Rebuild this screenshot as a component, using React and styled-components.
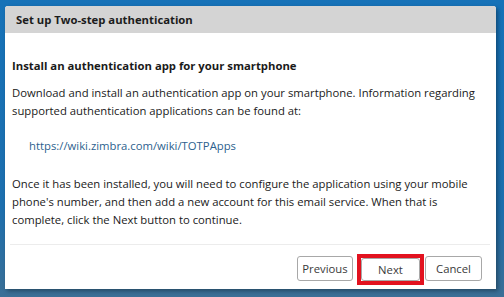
import React from "react";
import styled, { createGlobalStyle } from "styled-components";

const GlobalStyle = createGlobalStyle`
  html, body {
    margin: 0;
    padding: 0;
  }
  body {
    font-family: "Open Sans", "Noto Sans", sans-serif;
    color: #1a1a1a;
  }
`;

const Screen = styled.div`
  width: 504px;
  height: 297px;
  box-sizing: border-box;
  padding: 6px 8px 8px 5px;
  background: linear-gradient(180deg, #1672b8 0%, #1d6fae 70%, #3b6f96 100%);
  display: flex;
`;

const Dialog = styled.div`
  flex: 1;
  display: flex;
  flex-direction: column;
  background: #ffffff;
  border-radius: 3px 3px 0 0;
  box-shadow: 2px 2px 4px rgba(0, 0, 0, 0.35);
  overflow: hidden;
`;

const TitleBar = styled.div`
  height: 27px;
  flex-shrink: 0;
  background: #d4d4d4;
  display: flex;
  align-items: center;
  padding-left: 11px;
  font-size: 11.3px;
  font-weight: 700;
  color: #1c1c1c;
`;

const Body = styled.div`
  flex: 1;
  padding: 24px 12px 0 7px;
  font-size: 11.3px;
  line-height: 18px;
  white-space: nowrap;
`;

const Heading = styled.div`
  font-weight: 700;
  margin-bottom: 9px;
`;

const Paragraph = styled.p`
  margin: 0 0 ${(p) => p.$gap || 0}px;
`;

const Link = styled.a`
  display: block;
  margin: 0 0 20px 17px;
  color: #2d5f8e;
  text-decoration: none;
`;

const Footer = styled.div`
  margin: 0 6px 0 5px;
  border-top: 1px solid #ececec;
  height: 45px;
  box-sizing: border-box;
  display: flex;
  align-items: flex-start;
  justify-content: flex-end;
  padding: 11px 8px 0 0;
`;

const Button = styled.button`
  box-sizing: border-box;
  height: ${(p) => p.$height || 25}px;
  width: ${(p) => p.$width || 56}px;
  padding: 0;
  background: #ffffff;
  border: 1px solid #a8a8a8;
  border-radius: 3px;
  font-family: "Open Sans", "Noto Sans", sans-serif;
  font-size: 11.3px;
  color: #3a3a3a;
`;

const Highlight = styled.div`
  margin: -2px 1px 0 4px;
  border: 4px solid #e2121f;
  display: flex;
`;

export default function App() {
  return (
    <>
      <GlobalStyle />
      <Screen>
        <Dialog>
          <TitleBar>Set up Two-step authentication</TitleBar>
          <Body>
            <Heading>Install an authentication app for your smartphone</Heading>
            <Paragraph $gap={17}>
              Download and install an authentication app on your smartphone. Information regarding
              <br />
              supported authentication applications can be found at:
            </Paragraph>
            <Link href="#">https://wiki.zimbra.com/wiki/TOTPApps</Link>
            <Paragraph>
              Once it has been installed, you will need to configure the application using your mobile
              <br />
              phone's number, and then add a new account for this email service. When that is
              <br />
              complete, click the Next button to continue.
            </Paragraph>
          </Body>
          <Footer>
            <Button $width={56}>Previous</Button>
            <Highlight>
              <Button $width={59} $height={23}>Next</Button>
            </Highlight>
            <Button $width={57}>Cancel</Button>
          </Footer>
        </Dialog>
      </Screen>
    </>
  );
}
